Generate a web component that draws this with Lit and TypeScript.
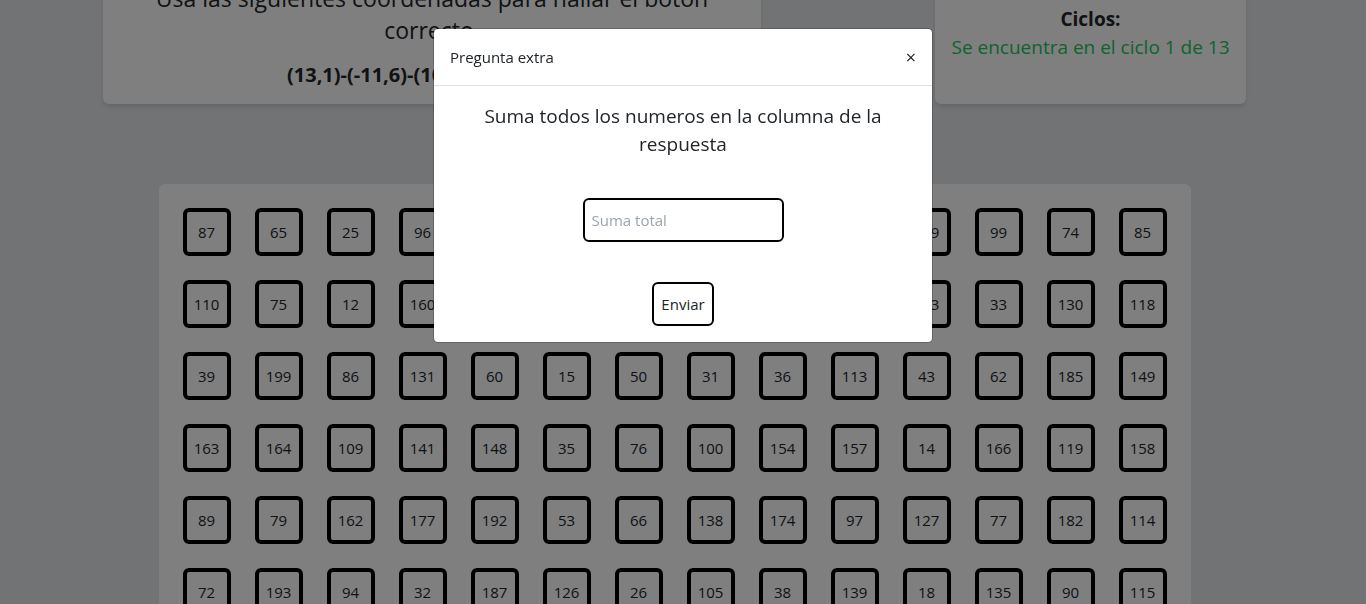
import { LitElement, html, css } from "lit";
import { customElement, state } from "lit/decorators.js";

const BOARD: number[][] = [
  [87, 65, 25, 96, 41, 122, 58, 170, 83, 101, 189, 99, 74, 85],
  [110, 75, 12, 160, 92, 47, 136, 29, 180, 64, 153, 33, 130, 118],
  [39, 199, 86, 131, 60, 15, 50, 31, 36, 113, 43, 62, 185, 149],
  [163, 164, 109, 141, 148, 35, 76, 100, 154, 157, 14, 166, 119, 158],
  [89, 79, 162, 177, 192, 53, 66, 138, 174, 97, 127, 77, 182, 114],
  [72, 193, 94, 32, 187, 126, 26, 105, 38, 139, 18, 135, 90, 115],
];

@customElement("number-board")
export class NumberBoard extends LitElement {
  static styles = css`
    :host {
      display: block;
    }
    .board {
      display: grid;
      grid-template-columns: repeat(14, 48px);
      gap: 24px;
      padding: 24px;
      border-radius: 6px;
      background: #fff;
    }
    .cell {
      box-sizing: border-box;
      height: 48px;
      padding: 0;
      border: 4px solid #000;
      border-radius: 6px;
      background: transparent;
      color: #212529;
      font: inherit;
      font-size: 15px;
      line-height: 24px;
      text-align: center;
    }
  `;

  render() {
    return html`<div class="board">
      ${BOARD.flat().map((n) => html`<button class="cell" type="button">${n}</button>`)}
    </div>`;
  }
}

@customElement("extra-question")
export class ExtraQuestion extends LitElement {
  static styles = css`
    :host {
      display: block;
      width: 100%;
      max-width: 500px;
    }
    .dialog {
      border: 1px solid rgba(0, 0, 0, 0.2);
      border-radius: 5px;
      background: #fff;
      background-clip: padding-box;
    }
    .head {
      display: flex;
      align-items: center;
      justify-content: space-between;
      padding: 16px;
      border-bottom: 1px solid #dee2e6;
    }
    .title {
      margin: 0;
      font-size: 15px;
      font-weight: 400;
      line-height: 24px;
    }
    .close {
      padding: 0;
      border: 0;
      background: transparent;
      color: inherit;
      font: inherit;
      font-size: 18px;
      line-height: 24px;
    }
    .body {
      display: flex;
      flex-direction: column;
      align-items: center;
      gap: 40px;
      padding: 16px;
    }
    .question {
      font-size: 19px;
      line-height: 28px;
      text-align: center;
    }
    .answer,
    .send {
      box-sizing: border-box;
      height: 44px;
      padding: 8px 7px;
      border: 2px solid #000;
      border-radius: 6px;
      background: #fff;
      color: inherit;
      font: inherit;
      font-size: 15px;
      line-height: 24px;
    }
    .answer {
      width: 201px;
    }
    .answer::placeholder {
      color: #9ca3af;
      opacity: 1;
    }
  `;

  render() {
    return html`<section class="dialog" role="dialog" aria-modal="true" aria-labelledby="title">
      <header class="head">
        <h5 class="title" id="title">Pregunta extra</h5>
        <button class="close" type="button" aria-label="Cerrar" @click=${this.close}>×</button>
      </header>
      <form class="body" @submit=${(e: Event) => e.preventDefault()}>
        <label class="question" for="total">Suma todos los numeros en la columna de la respuesta</label>
        <input class="answer" id="total" type="text" placeholder="Suma total" />
        <button class="send" type="submit">Enviar</button>
      </form>
    </section>`;
  }

  private close() {
    this.dispatchEvent(new CustomEvent("close"));
  }
}

@customElement("app-root")
export class AppRoot extends LitElement {
  static styles = css`
    :host {
      display: block;
      height: 100vh;
      overflow: hidden;
      background: #e5e7eb;
      color: #212529;
      font-family: "Segoe UI", "Open Sans", "Noto Sans", sans-serif;
    }
    .page {
      display: flex;
      flex-direction: column;
      align-items: center;
      gap: 80px;
      padding-right: 17px;
    }
    .summary {
      box-sizing: border-box;
      display: flex;
      justify-content: space-between;
      width: 100%;
      margin-top: -34px;
      padding: 0 103px;
    }
    .card {
      box-sizing: border-box;
      border-radius: 6px;
      background: #fff;
      box-shadow: 0 4px 6px -1px rgba(0, 0, 0, 0.1), 0 2px 4px -1px rgba(0, 0, 0, 0.06);
      text-align: center;
      font-size: 19px;
      line-height: 28px;
    }
    .clue {
      width: 658px;
      padding: 16px 48px 15px;
    }
    .cycles {
      width: 311px;
      padding-top: 39px;
    }
    .lead {
      margin: 0 0 15px;
      font-size: 23px;
      line-height: 32px;
    }
    .strong {
      margin: 0;
      font-weight: 700;
    }
    .coords {
      font-size: 20px;
    }
    .progress {
      margin: 0;
      color: #22c55e;
    }
    .backdrop {
      position: fixed;
      inset: 0;
      display: flex;
      justify-content: center;
      align-items: flex-start;
      padding-top: 28px;
      background: rgba(0, 0, 0, 0.5);
    }
  `;

  @state() private asking = true;

  render() {
    return html`
      <main class="page">
        <div class="summary">
          <section class="card clue">
            <p class="lead">Usa las siguientes coordenadas para hallar el botón correcto.</p>
            <p class="strong coords">(13,1)-(-11,6)-(10,-3)-(-5,2)-(7,4)</p>
          </section>
          <section class="card cycles">
            <p class="strong">Ciclos:</p>
            <p class="progress">Se encuentra en el ciclo 1 de 13</p>
          </section>
        </div>
        <number-board></number-board>
      </main>
      ${this.asking
        ? html`<div class="backdrop">
            <extra-question @close=${() => (this.asking = false)}></extra-question>
          </div>`
        : null}
    `;
  }
}
